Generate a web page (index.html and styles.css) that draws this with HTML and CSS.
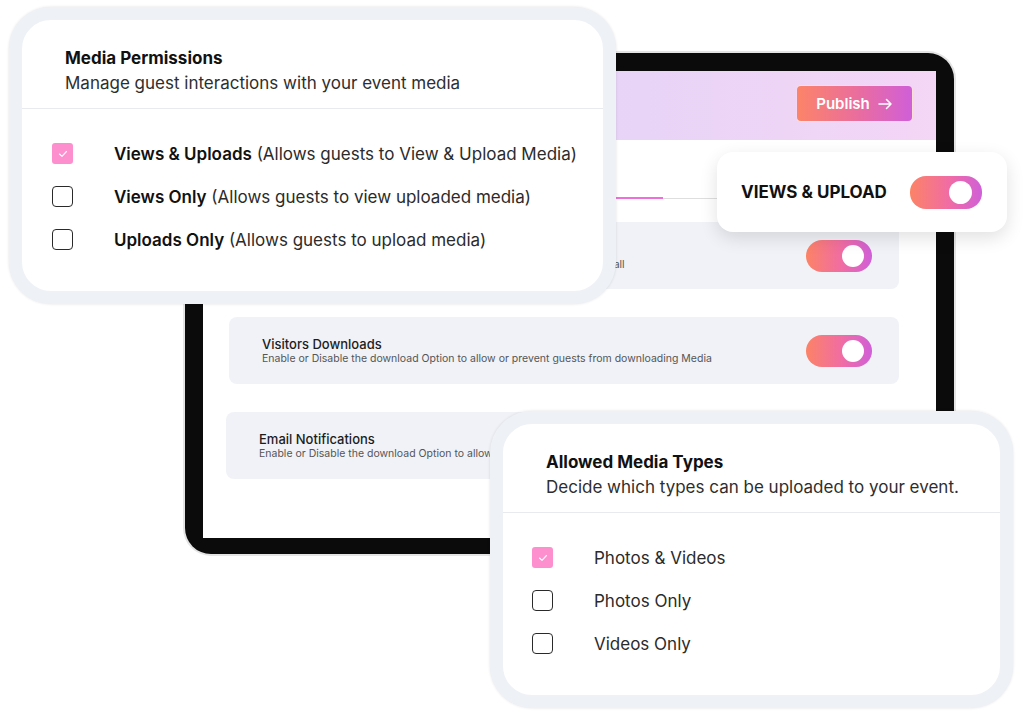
FILE: index.html
```html
<!DOCTYPE html>
<html lang="en">
<head>
    <meta charset="UTF-8">
    <meta name="viewport" content="width=device-width, initial-scale=1.0">
    <title>Media Settings</title>
    <link rel="stylesheet" href="styles.css">
</head>
<body>
    <div class="stage">
        <!-- tablet mockup in the back -->
        <div class="tablet">
            <div class="screen">
                <div class="screen-header">
                    <button class="publish">Publish
                        <svg class="arrow" width="15" height="12" viewBox="0 0 15 12"><path d="M1 6h12M8.5 1.5 13 6l-4.5 4.5" fill="none" stroke="#fff" stroke-width="1.5" stroke-linecap="round" stroke-linejoin="round"/></svg>
                    </button>
                </div>
                <div class="tabs"><span class="tab-indicator"></span></div>
                <div class="settings">
                    <div class="setting">
                        <div class="setting-text sub-only">
                            <p>Enable or Disable the display of all guest uploads on your Live Photo Wall</p>
                        </div>
                        <span class="toggle"><span class="knob"></span></span>
                    </div>
                    <div class="setting">
                        <div class="setting-text">
                            <h4>Visitors Downloads</h4>
                            <p>Enable or Disable the download Option to allow or prevent guests from downloading Media</p>
                        </div>
                        <span class="toggle"><span class="knob"></span></span>
                    </div>
                    <div class="setting setting-shift">
                        <div class="setting-text">
                            <h4>Email Notifications</h4>
                            <p>Enable or Disable the download Option to allow</p>
                        </div>
                        <span class="toggle"><span class="knob"></span></span>
                    </div>
                </div>
            </div>
        </div>

        <!-- floating cards -->
        <section class="panel panel-permissions">
            <div class="panel-head">
                <h2>Media Permissions</h2>
                <p>Manage guest interactions with your event media</p>
            </div>
            <div class="options">
                <div class="option">
                    <span class="check checked">
                        <svg width="10" height="8" viewBox="0 0 10 8"><path d="M1.5 4 4 6.3 8.5 1.5" fill="none" stroke="#fff" stroke-width="1.1" stroke-linecap="round" stroke-linejoin="round"/></svg>
                    </span>
                    <span class="option-label"><b>Views &amp; Uploads</b> (Allows guests to View &amp; Upload Media)</span>
                </div>
                <div class="option">
                    <span class="check"></span>
                    <span class="option-label"><b>Views Only</b> (Allows guests to view uploaded media)</span>
                </div>
                <div class="option">
                    <span class="check"></span>
                    <span class="option-label"><b>Uploads Only</b> (Allows guests to upload media)</span>
                </div>
            </div>
        </section>

        <div class="views-card">
            <span class="views-label">VIEWS &amp; UPLOAD</span>
            <span class="toggle toggle-lg"><span class="knob"></span></span>
        </div>

        <section class="panel panel-types">
            <div class="panel-head">
                <h2>Allowed Media Types</h2>
                <p>Decide which types can be uploaded to your event.</p>
            </div>
            <div class="options">
                <div class="option">
                    <span class="check checked">
                        <svg width="10" height="8" viewBox="0 0 10 8"><path d="M1.5 4 4 6.3 8.5 1.5" fill="none" stroke="#fff" stroke-width="1.1" stroke-linecap="round" stroke-linejoin="round"/></svg>
                    </span>
                    <span class="option-label">Photos &amp; Videos</span>
                </div>
                <div class="option">
                    <span class="check"></span>
                    <span class="option-label">Photos Only</span>
                </div>
                <div class="option">
                    <span class="check"></span>
                    <span class="option-label">Videos Only</span>
                </div>
            </div>
        </section>
    </div>
</body>
</html>
```

FILE: styles.css
```css
body {
    margin: 0;
    background: #fff;
    font-family: Inter, "Noto Sans", sans-serif;
    color: #1a1a1a;
}
.stage {
    position: relative;
    width: 1024px;
    height: 718px;
    overflow: hidden;
}

/* tablet */
.tablet {
    position: absolute;
    left: 185px;
    top: 53px;
    width: 769px;
    height: 501px;
    box-sizing: border-box;
    padding: 18px 18px 16px;
    background: #0b0b0b;
    border-radius: 26px;
    box-shadow: 0 0 0 2px #e4e4e4;
}
.screen {
    height: 100%;
    background: #fff;
    display: flex;
    flex-direction: column;
}
.screen-header {
    height: 69px;
    box-sizing: border-box;
    padding: 14px 23px 0 0;
    display: flex;
    justify-content: flex-end;
    align-items: flex-start;
    background: linear-gradient(90deg, #e2d7f8, #e8d4f7 60%, #f4d6f6);
}
.publish {
    width: 117px;
    height: 37px;
    display: flex;
    align-items: center;
    justify-content: center;
    gap: 8px;
    border: 1px solid rgba(255, 255, 255, 0.75);
    border-radius: 5px;
    background: linear-gradient(90deg, #fc8468, #e96ca0 55%, #d05fd8);
    color: #fff;
    font-family: Inter, sans-serif;
    font-size: 15px;
    font-weight: 600;
    padding: 0;
}
.tabs {
    height: 58px;
    margin: 0 37px 0 26px;
    border-bottom: 1px solid #dedede;
    display: flex;
    align-items: flex-end;
}
.tab-indicator {
    width: 434px;
    height: 2px;
    margin-bottom: -1px;
    background: #ee6fda;
}
.settings {
    margin-top: 23px;
    padding: 0 37px 0 26px;
    display: flex;
    flex-direction: column;
    gap: 28px;
}
.setting {
    height: 67px;
    box-sizing: border-box;
    padding: 0 27px 0 33px;
    background: #f0f2f7;
    border-radius: 8px;
    display: flex;
    align-items: center;
    justify-content: space-between;
}
.setting-shift {
    margin-left: -3px;
}
.setting-text h4 {
    margin: 0;
    font-size: 13px;
    line-height: 15px;
    font-weight: 500;
    color: #1d1d1d;
}
.setting-text p {
    margin: 0;
    font-size: 10.5px;
    line-height: 13px;
    color: #555;
    white-space: nowrap;
}
.setting-text.sub-only {
    padding-top: 17px;
}

/* toggles */
.toggle {
    width: 66px;
    height: 32px;
    box-sizing: border-box;
    padding-right: 8px;
    border-radius: 16px;
    background: linear-gradient(90deg, #fc8366, #f06ca4 55%, #d05fd8);
    display: flex;
    align-items: center;
    justify-content: flex-end;
    flex-shrink: 0;
}
.knob {
    width: 22px;
    height: 22px;
    border-radius: 50%;
    background: #fff;
}
.toggle-lg {
    width: 72px;
    height: 33px;
    padding-right: 10px;
}
.toggle-lg .knob {
    width: 23px;
    height: 23px;
}

/* floating panels */
.panel {
    position: absolute;
    box-sizing: border-box;
    height: 297px;
    background: #fff;
    border: 13px solid #eef1f6;
    border-radius: 42px;
    box-shadow: 0 0 3px rgba(0, 0, 0, 0.12);
}
.panel-permissions {
    left: 9px;
    top: 7px;
    width: 607px;
}
.panel-types {
    left: 490px;
    top: 411px;
    width: 523px;
}
.panel-head {
    padding: 27px 20px 14px 43px;
    border-bottom: 1px solid #e9eaed;
}
.panel-head h2 {
    margin: 0;
    font-size: 17px;
    line-height: 22px;
    font-weight: 700;
    color: #111;
}
.panel-head p {
    margin: 3px 0 0;
    font-size: 17px;
    line-height: 22px;
    color: #2e2e2e;
}
.options {
    padding: 34px 0 0 30px;
    display: flex;
    flex-direction: column;
    gap: 22px;
}
.panel-types .options {
    padding-left: 29px;
}
.option {
    height: 21px;
    display: flex;
    align-items: center;
}
.check {
    width: 21px;
    height: 21px;
    box-sizing: border-box;
    border: 1.5px solid #2a2a2a;
    border-radius: 4px;
    flex-shrink: 0;
    display: flex;
    align-items: center;
    justify-content: center;
}
.check.checked {
    border: none;
    border-radius: 3px;
    background: #fd8fcf;
}
.option-label {
    margin-left: 41px;
    font-size: 17px;
    line-height: 22px;
    color: #2b2b2b;
    white-space: nowrap;
}
.option-label b {
    font-weight: 600;
    color: #111;
}

/* views card */
.views-card {
    position: absolute;
    left: 717px;
    top: 152px;
    width: 290px;
    height: 80px;
    box-sizing: border-box;
    padding: 0 25px 0 24px;
    background: #fff;
    border-radius: 16px;
    box-shadow: 0 6px 18px rgba(0, 0, 0, 0.12);
    display: flex;
    align-items: center;
    justify-content: space-between;
}
.views-label {
    font-size: 17px;
    font-weight: 700;
    color: #111;
}
```
